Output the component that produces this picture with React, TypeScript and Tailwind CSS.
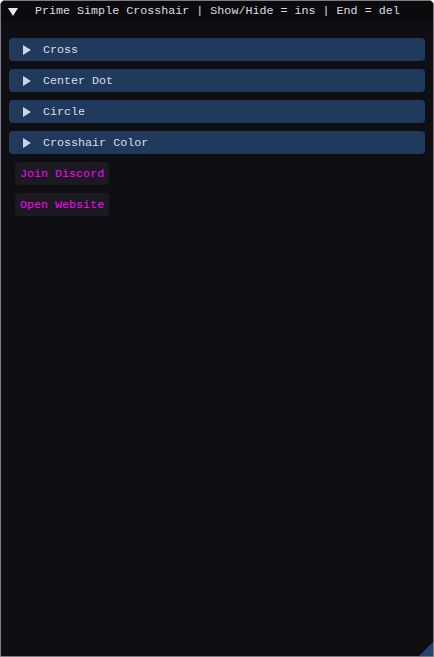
const headers = ["Cross", "Center Dot", "Circle", "Crosshair Color"];
const buttons = ["Join Discord", "Open Website"];

const Arrow = ({ down }: { down?: boolean }) => (
  <svg width="10" height="10" viewBox="0 0 10 10" className="shrink-0">
    {down ? <polygon points="0,1 10,1 5,9" fill="#e6e6ea" /> : <polygon points="1,0 9,5 1,10" fill="#d0d4dc" />}
  </svg>
);

export default function App() {
  return (
    <div
      className="w-[434px] h-[657px] bg-[#0f0e13] border border-[#7c7c88] rounded-t-[5px] flex flex-col overflow-hidden relative text-[11.7px] leading-none text-[#dcdce2]"
      style={{ fontFamily: '"Liberation Mono", "DejaVu Sans Mono", monospace' }}
    >
      <div className="h-[21px] bg-[#0b0b0e] flex items-center pl-[7px] gap-[17px] shrink-0">
        <Arrow down />
        <span className="whitespace-pre pt-[1px]">Prime Simple Crosshair | Show/Hide = ins | End = del</span>
      </div>
      <div className="flex flex-col gap-[8px] pt-[16px] px-[8px]">
        {headers.map((h) => (
          <div key={h} className="h-[23px] bg-[#203a5e] rounded-[4px] flex items-center pl-[13px] gap-[11px]">
            <Arrow />
            <span className="pt-[2px]">{h}</span>
          </div>
        ))}
        <div className="flex flex-col gap-[8px] pl-[6px]">
          {buttons.map((b) => (
            <div key={b} className="self-start h-[23px] bg-[#1b1a20] rounded-[4px] flex items-center px-[5px] pt-[2px] text-[#ff00ff]">
              {b}
            </div>
          ))}
        </div>
      </div>
      <svg className="absolute right-0 bottom-0" width="14" height="14" viewBox="0 0 14 14">
        <polygon points="14,0 14,14 0,14" fill="#25446e" />
      </svg>
    </div>
  );
}
